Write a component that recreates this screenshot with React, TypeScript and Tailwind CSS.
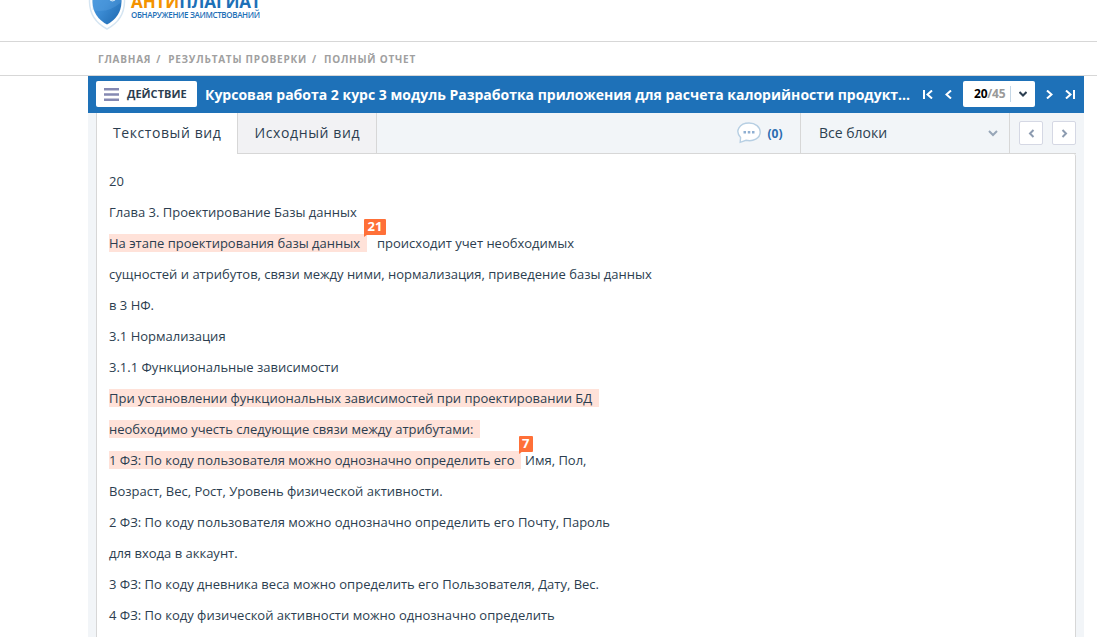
import type { ReactNode } from 'react';

function Chevron({ d, className = '', w = 7, h = 10 }: { d: string; className?: string; w?: number; h?: number }) {
  return (
    <svg width={w} height={h} viewBox={`0 0 ${w} ${h}`} fill="none" stroke="currentColor" strokeWidth="2" className={`shrink-0 ${className}`}>
      <path d={d} />
    </svg>
  );
}

function Logo() {
  return (
    <div className="flex h-[41px] items-end overflow-hidden pl-[88px]">
      <svg width="38" height="50" viewBox="0 0 38 50" className="mb-[11px] shrink-0">
        <defs>
          <linearGradient id="shield" x1="0" y1="0" x2="1" y2="1">
            <stop offset="0" stopColor="#4a9be0" />
            <stop offset="0.5" stopColor="#3a8ad2" />
            <stop offset="1" stopColor="#1c66ad" />
          </linearGradient>
        </defs>
        <path d="M1.5 4 Q19 -2 36.500 4 V22 Q36 40 19 49 Q2 40 1.500 22 Z" fill="#fff" stroke="#d5e5f2" strokeWidth="1.500" />
        <path d="M4.500 7 Q19 2 33.500 7 V22 Q33 37 19 44.500 Q5 37 4.500 22 Z" fill="url(#shield)" />
        <path d="M4.500 30 Q20 34 33.500 22 V7 H4.500 Z" fill="#6bb1ea" opacity="0.25" />
        <circle cx="24.500" cy="18" r="3" fill="#8fc2ec" stroke="#d5e8f7" />
      </svg>
      <div className="mb-[21px] ml-[5px] flex flex-col">
        <div className="-mb-px text-[17px] leading-[18px] font-bold tracking-[-0.1px] text-[#1d70b7]">
          <span className="text-[#f39200]">АНТИ</span>ПЛАГИАТ
        </div>
        <div className="text-[8px] leading-[10px] font-semibold tracking-[-0.35px] text-[#1d70b7]">ОБНАРУЖЕНИЕ ЗАИМСТВОВАНИЙ</div>
      </div>
    </div>
  );
}

function Mark({ children, badge }: { children: ReactNode; badge?: string }) {
  return (
    <span className="relative bg-[#ffe2d9] pr-[6.5px]">
      {children}
      {badge && (
        <span className="absolute -top-[15px] left-[calc(100%-2.5px)] flex h-4 items-center rounded-[1px] bg-[#ff7038] px-[3.5px] pb-[2px] text-[13px] leading-[14px] font-bold text-white">
          {badge}
          <svg width="4" height="3" className="absolute top-[15px] left-0">
            <path d="M0 0H4L0 3Z" fill="#ff7038" />
          </svg>
        </span>
      )}
    </span>
  );
}

const lines: ReactNode[] = [
  '20',
  'Глава 3. Проектирование Базы данных',
  <><Mark badge="21">На этапе проектирования базы данных</Mark><span className="ml-[10.5px]">происходит учет необходимых</span></>,
  'сущностей и атрибутов, связи между ними, нормализация, приведение базы данных',
  'в 3 НФ.',
  '3.1 Нормализация',
  '3.1.1 Функциональные зависимости',
  <Mark>При установлении функциональных зависимостей при проектировании БД</Mark>,
  <Mark>необходимо учесть следующие связи между атрибутами:</Mark>,
  <><Mark badge="7">1 ФЗ: По коду пользователя можно однозначно определить его</Mark><span className="ml-[4px]">Имя, Пол,</span></>,
  'Возраст, Вес, Рост, Уровень физической активности.',
  '2 ФЗ: По коду пользователя можно однозначно определить его Почту, Пароль',
  'для входа в аккаунт.',
  '3 ФЗ: По коду дневника веса можно определить его Пользователя, Дату, Вес.',
  '4 ФЗ: По коду физической активности можно однозначно определить',
];

export default function App() {
  return (
    <div className="h-[637px] w-[1097px] overflow-hidden bg-white font-['Open_Sans','Noto_Sans',sans-serif] text-[#2c3e50]">
      <header>
        <Logo />
        <nav className="flex h-[35px] items-center gap-[7px] border-y border-[#d7d7d7] pt-[2px] pl-[98px] text-[10px] font-bold tracking-[0.77px] whitespace-nowrap text-[#a0a0a0]">
          <span>ГЛАВНАЯ<span className="ml-[5px]">/</span></span>
          <span>РЕЗУЛЬТАТЫ ПРОВЕРКИ<span className="ml-[5px]">/</span></span>
          <span>ПОЛНЫЙ ОТЧЕТ</span>
        </nav>
      </header>
      <main className="ml-[88px] flex h-[561px] w-[996px] flex-col bg-[#f2f5f8]">
        <div className="flex h-[37px] shrink-0 items-center bg-[#1e71b8] pl-2 text-white">
          <button className="mb-px flex h-[26px] w-[101px] shrink-0 items-center rounded-[2px] bg-white pl-2 text-[11px] font-bold text-[#2c3e50]">
            <svg width="15" height="13" className="mr-2 shrink-0" fill="#8589b2">
              <path d="M0 0h15v2.500H0zM0 5.250h15v2.500H0zM0 10.500h15v2.500H0z" />
            </svg>
            ДЕЙСТВИЕ
          </button>
          <h1 className="ml-2 w-[707px] shrink-0 text-[14px] font-bold whitespace-nowrap">
            Курсовая работа 2 курс 3 модуль Разработка приложения для расчета калорийности продукт...
          </h1>
          <Chevron d="M1 0V9M9 0.500L4.500 4.500L9 8.500" w={10} h={9} className="ml-[11px]" />
          <Chevron d="M6 0.500L1.500 4.500L6 8.500" h={9} className="ml-[12px]" />
          <div className="mb-px ml-[11px] flex h-[26px] w-[72px] shrink-0 items-center rounded-[2px] bg-white pl-[11px] text-[12px] font-bold tracking-[-0.2px]">
            <span className="w-[35px] text-[#999]"><span className="text-black">20</span>/45</span>
            <span className="ml-px h-4 w-px bg-[#c5d7e6]" />
            <Chevron d="M0.500 1L4 4.500L7.500 1" w={8} h={6} className="ml-2 text-[#2c3e50]" />
          </div>
          <Chevron d="M1 0.500L5.500 4.500L1 8.500" h={9} className="ml-[11px]" />
          <Chevron d="M1 0.500L5.500 4.500L1 8.500M9 0V9" w={10} h={9} className="ml-[12px]" />
        </div>
        <div className="ml-2 flex h-[41px] shrink-0 text-[14px]">
          <div className="flex w-[141px] shrink-0 items-center border-l border-[#d7d7d7] bg-white pb-[2px] pl-4 tracking-[0.58px]">Текстовый вид</div>
          <div className="flex w-[140px] shrink-0 items-center border-x border-b border-[#d7d7d7] bg-[#f2f2f4] pb-px pl-[16.5px] tracking-[0.62px]">Исходный вид</div>
          <div className="flex w-[699px] items-center border-b border-[#d7d7d7]">
            <div className="flex h-full w-[424px] shrink-0 items-center justify-end border-r border-[#d7d7d7] pr-[17.5px]">
              <svg width="24" height="22" viewBox="0 0 24 22" className="mr-[7px]">
                <path d="M3.600 15.500C-2.500 9 2.500 1 12 1C18.500 1 23.200 5 23.200 10C23.200 16.500 16 20 9 18.300L3.200 20.300Z" fill="#fff" stroke="#b7cfe3" strokeWidth="1.400" />
                <path d="M6.500 9h2.500v2.500H6.500zM10.800 9h2.500v2.500h-2.500zM15 9h2.500v2.500H15z" fill="#8fafd2" />
              </svg>
              <span className="pt-px text-[12px] font-bold text-[#2b6cb0]">(0)</span>
            </div>
            <div className="flex h-full w-[209px] shrink-0 items-center justify-between border-r border-[#d7d7d7] pr-[11px] pl-[18px]">
              <span className="pb-px">Все блоки</span>
              <Chevron d="M1 1L5 5L9 1" w={10} h={7} className="text-[#97a6b8]" />
            </div>
            <div className="ml-[9px] flex gap-[9px] text-[#8c9bb0]">
              <span className="flex size-6 items-center justify-center rounded-[2px] border border-[#d5d8e4] bg-white"><Chevron d="M5.500 1L2 4.500L5.500 8" h={9} /></span>
              <span className="flex size-6 items-center justify-center rounded-[2px] border border-[#d5d8e4] bg-white"><Chevron d="M1.500 1L5 4.500L1.500 8" h={9} /></span>
            </div>
          </div>
        </div>
        <div className="mx-2 flex-1 rounded-tr-[2px] border-x border-[#d7d7d7] bg-white pt-3 pl-3 text-[13px] leading-[31px] whitespace-nowrap">
          {lines.map((line, i) => <p key={i}>{line}</p>)}
        </div>
      </main>
    </div>
  );
}
